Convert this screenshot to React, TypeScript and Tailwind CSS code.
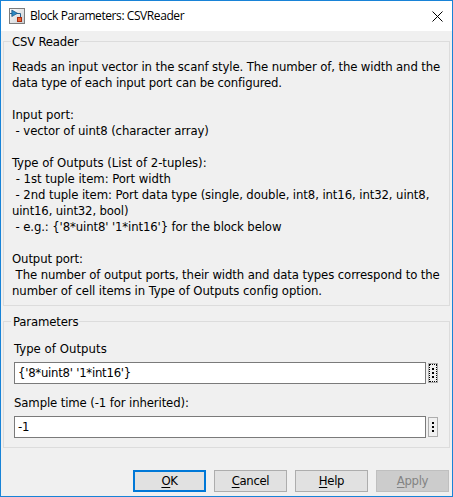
import type { ReactNode } from "react";

const description: [string, string][] = [
  ["Reads an input vector in the scanf style. The number of, the width and the", "tracking-[-0.12px]"],
  ["data type of each input port can be configured.", "tracking-[-0.16px]"],
  ["", ""],
  ["Input port:", ""],
  [" - vector of uint8 (character array)", "tracking-[-0.11px]"],
  ["", ""],
  ["Type of Outputs (List of 2-tuples):", "tracking-[-0.03px]"],
  [" - 1st tuple item: Port width", "tracking-[-0.05px]"],
  [" - 2nd tuple item: Port data type (single, double, int8, int16, int32, uint8,", "tracking-[-0.1px]"],
  ["uint16, uint32, bool)", "tracking-[-0.15px]"],
  [" - e.g.: {'8*uint8' '1*int16'} for the block below", "tracking-[-0.12px]"],
  ["", ""],
  ["Output port:", "tracking-[-0.12px]"],
  [" The number of output ports, their width and data types correspond to the", "tracking-[-0.11px]"],
  ["number of cell items in Type of Outputs config option.", "tracking-[-0.09px]"],
];

function Group({ title, titleClass, className, children }: { title: string; titleClass: string; className: string; children: ReactNode }) {
  return (
    <section className={`relative mx-[2px] border border-[#dcdcdc] ${className}`}>
      <h2 className={`absolute left-[7px] -top-[8px] h-4 bg-[#f0f0f0] pr-[1px] leading-4 whitespace-pre ${titleClass}`}>{title}</h2>
      {children}
    </section>
  );
}

function Field({ label, labelClass, value, focused }: { label: string; labelClass: string; value: string; focused?: boolean }) {
  return (
    <div className="flex flex-col">
      <label className={`h-[21px] leading-4 whitespace-pre ${labelClass}`}>{label}</label>
      <div className="flex items-center gap-[2px]">
        <div className="flex h-[22px] w-[412px] items-center border border-[#7a7a7a] bg-white pl-[3px] tracking-[-0.25px] whitespace-pre">
          {value}
        </div>
        <button className="relative flex h-5 w-[10px] flex-col items-center justify-center gap-[2px] border border-[#adadad] bg-[#f0f0f0]">
          {focused && <span className="absolute inset-0 border border-dotted border-black" />}
          <span className="size-[2px] bg-black" />
          <span className="size-[2px] bg-black" />
          <span className="size-[2px] bg-black" />
        </button>
      </div>
    </div>
  );
}

function DialogButton({ mnemonic, rest, className }: { mnemonic: string; rest: string; className: string }) {
  return (
    <button className={`flex h-[22px] w-[73px] items-center justify-center tracking-[-0.35px] ${className}`}>
      <span className="underline underline-offset-2">{mnemonic}</span>
      {rest}
    </button>
  );
}

export default function App() {
  return (
    <main className="flex h-[497px] w-[453px] flex-col border border-[#1883d7] bg-[#f0f0f0] font-['DejaVu_Sans_Condensed','DejaVu_Sans',sans-serif] text-[13px] text-black [font-stretch:condensed]">
      <header className="flex h-[30px] shrink-0 items-center bg-white pl-2">
        <svg width="16" height="16" viewBox="0 0 16 16">
          <defs>
            <linearGradient id="tile" x1="0" y1="0" x2="1" y2="1">
              <stop offset="0" stopColor="#ffffff" />
              <stop offset="1" stopColor="#c8ccd0" />
            </linearGradient>
          </defs>
          <rect x="0.5" y="0.5" width="15" height="15" fill="url(#tile)" stroke="#7c7c7c" />
          <path d="M1 5.5H11.5V9" fill="none" stroke="#2a5f8a" />
          <path d="M2.8 2L8.5 5.3L2.8 8.6Z" fill="#2a8ac4" stroke="#174f7c" strokeWidth="0.7" />
          <rect x="8.5" y="9.5" width="4" height="4" fill="#ee6530" stroke="#a62c10" />
        </svg>
        <h1 className="ml-[5px] font-['Open_Sans','Noto_Sans',sans-serif] text-[12px] leading-4 tracking-[-0.42px] whitespace-pre [font-stretch:normal]">
          Block Parameters: CSVReader
        </h1>
        <svg className="mr-[9px] ml-auto" width="11" height="11" viewBox="0 0 11 11">
          <path d="M0.5 0.5L10.5 10.5M10.5 0.5L0.5 10.5" stroke="#000" fill="none" />
        </svg>
      </header>
      <Group title="CSV Reader" titleClass="pl-[1px] tracking-[-0.2px]" className="mt-[10px] h-[265px] pt-[17px] pl-2">
        {description.map(([text, tracking], i) => (
          <p key={i} className={`h-4 leading-4 whitespace-pre ${tracking}`}>{text}</p>
        ))}
      </Group>
      <Group title="Parameters" titleClass="pl-[2px] tracking-[-0.15px]" className="mt-[15px] flex h-[127px] flex-col gap-[11px] pt-[19px] pl-[10px]">
        <Field label="Type of Outputs" labelClass="tracking-[0.05px]" value="{'8*uint8' '1*int16'}" focused />
        <Field label="Sample time (-1 for inherited):" labelClass="tracking-[-0.12px]" value="-1" />
      </Group>
      <footer className="mt-[22px] mr-[3px] flex justify-end gap-2">
        <DialogButton mnemonic="O" rest="K" className="border-2 border-[#0078d7] bg-[#e1e1e1]" />
        <DialogButton mnemonic="C" rest="ancel" className="border border-[#adadad] bg-[#e1e1e1]" />
        <DialogButton mnemonic="H" rest="elp" className="border border-[#adadad] bg-[#e1e1e1]" />
        <DialogButton mnemonic="A" rest="pply" className="border border-[#bfbfbf] bg-[#cccccc] text-[#838383]" />
      </footer>
    </main>
  );
}
